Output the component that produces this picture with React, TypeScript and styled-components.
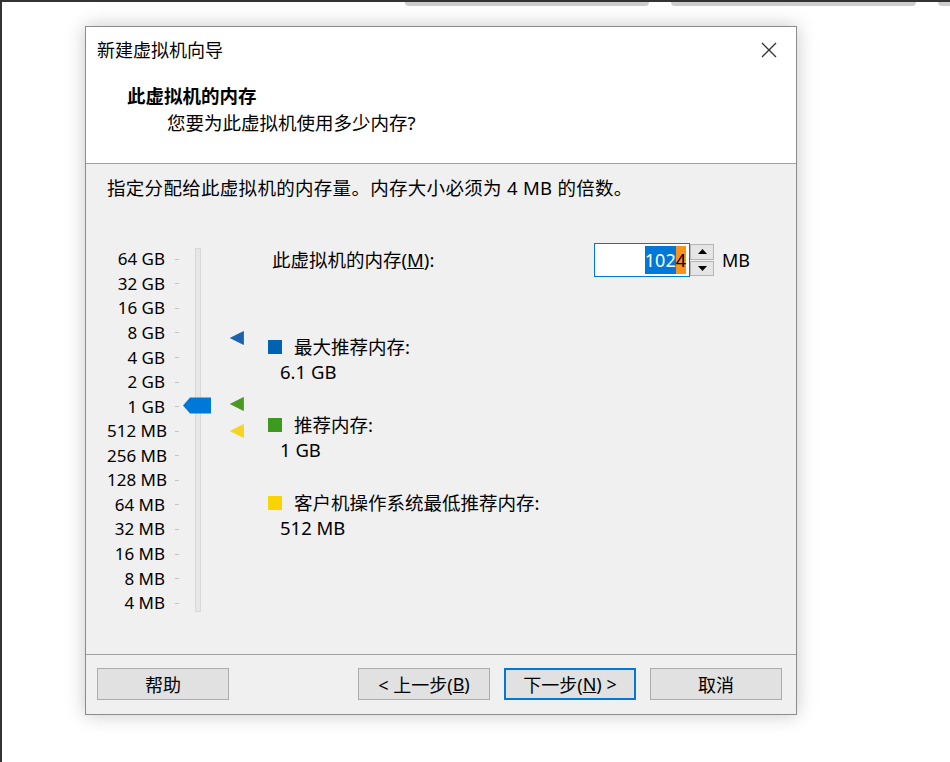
import React from 'react'
import styled, { createGlobalStyle } from 'styled-components'

const GlobalStyle = createGlobalStyle`
  html, body {
    margin: 0;
    padding: 0;
    background: #fff;
  }
  body {
    font-family: "Noto Sans", "Noto Sans CJK SC", sans-serif;
    color: #000;
  }
`;

const scale = [
    '64 GB', '32 GB', '16 GB', '8 GB', '4 GB', '2 GB', '1 GB',
    '512 MB', '256 MB', '128 MB', '64 MB', '32 MB', '16 MB', '8 MB', '4 MB',
];

const legend = [
    { color: '#0063b1', title: '最大推荐内存:', value: '6.1 GB' },
    { color: '#3d9a1f', title: '推荐内存:', value: '1 GB' },
    { color: '#fad400', title: '客户机操作系统最低推荐内存:', value: '512 MB' },
];

const markers = [
    { color: '#1a62ad', top: 88 },
    { color: '#4a9a22', top: 154 },
    { color: '#f5d420', top: 181 },
];

export default function App() {
    return (
        <>
            <GlobalStyle />
            <Screen>
                <TabStrip>
                    <Tab $w={244} />
                    <Tab $w={245} />
                    <Tab $w={30} />
                </TabStrip>
                <Dialog>
                    <Header>
                        <TitleRow>
                            <Title>新建虚拟机向导</Title>
                            <CloseIcon viewBox="0 0 16 16">
                                <path d="M1 1 L15 15 M15 1 L1 15" stroke="#333" strokeWidth="1.3" />
                            </CloseIcon>
                        </TitleRow>
                        <Heading>此虚拟机的内存</Heading>
                        <Subtitle>您要为此虚拟机使用多少内存?</Subtitle>
                    </Header>
                    <Body>
                        <Description>指定分配给此虚拟机的内存量。内存大小必须为 4 MB 的倍数。</Description>
                        <Main>
                            <SliderArea>
                                <Labels>
                                    {scale.map(s => (
                                        <ScaleRow key={s}>
                                            <ScaleLabel>{s}</ScaleLabel>
                                            <Tick />
                                        </ScaleRow>
                                    ))}
                                </Labels>
                                <Track />
                                <Thumb viewBox="0 0 28 17">
                                    <polygon points="0,8.5 7,0.5 28,0.5 28,16.5 7,16.5" fill="#0078d7" />
                                </Thumb>
                                {markers.map(m => (
                                    <Marker key={m.top} viewBox="0 0 14 14" style={{ top: m.top }}>
                                        <polygon points="0.5,7 13.5,0.5 13.5,13.5" fill={m.color} stroke={m.color} strokeWidth="0.8" strokeLinejoin="round" />
                                    </Marker>
                                ))}
                            </SliderArea>
                            <RightColumn>
                                <InputRow>
                                    <MemLabel>此虚拟机的内存(<u>M</u>):</MemLabel>
                                    <SpinInput>
                                        <Selected>102</Selected>
                                        <Caret>4</Caret>
                                    </SpinInput>
                                    <SpinButtons>
                                        <SpinButton>
                                            <svg width="9" height="5" viewBox="0 0 9 5"><polygon points="4.5,0 9,5 0,5" fill="#000" /></svg>
                                        </SpinButton>
                                        <SpinButton>
                                            <svg width="9" height="5" viewBox="0 0 9 5"><polygon points="0,0 9,0 4.5,5" fill="#000" /></svg>
                                        </SpinButton>
                                    </SpinButtons>
                                    <Unit>MB</Unit>
                                </InputRow>
                                <Legend>
                                    {legend.map(l => (
                                        <LegendItem key={l.title}>
                                            <LegendTitle>
                                                <Swatch $color={l.color} />
                                                {l.title}
                                            </LegendTitle>
                                            <LegendValue>{l.value}</LegendValue>
                                        </LegendItem>
                                    ))}
                                </Legend>
                            </RightColumn>
                        </Main>
                    </Body>
                    <Footer>
                        <Button>帮助</Button>
                        <Spacer />
                        <Button>&lt; 上一步(<u>B</u>)</Button>
                        <Button $primary>下一步(<u>N</u>) &gt;</Button>
                        <Button>取消</Button>
                    </Footer>
                </Dialog>
            </Screen>
        </>
    )
}

const Screen = styled.div`
    width: 950px;
    height: 762px;
    box-sizing: border-box;
    border-left: 2px solid #333;
    border-top: 2px solid #333;
    overflow: hidden;
    background: #fff;
`;

const TabStrip = styled.div`
    display: flex;
    gap: 22px;
    padding-left: 403px;
    height: 4px;
`;

const Tab = styled.div<{ $w: number }>`
    flex: none;
    width: ${p => p.$w}px;
    height: 4px;
    background: #cdcdcd;
    border-radius: 0 0 5px 5px;
`;

const Dialog = styled.div`
    margin: 20px 0 0 83px;
    width: 712px;
    height: 689px;
    box-sizing: border-box;
    border: 1px solid #8c8c8c;
    background: #f0f0f0;
    box-shadow: 0 0 18px rgba(0, 0, 0, 0.22);
    display: flex;
    flex-direction: column;
`;

const Header = styled.div`
    height: 137px;
    box-sizing: border-box;
    background: #fff;
    border-bottom: 1px solid #a0a0a0;
`;

const TitleRow = styled.div`
    height: 46px;
    display: flex;
    align-items: center;
    justify-content: space-between;
    padding: 0 19px 0 11px;
`;

const Title = styled.div`
    font-size: 18px;
    line-height: 22px;
`;

const CloseIcon = styled.svg`
    width: 16px;
    height: 16px;
`;

const Heading = styled.div`
    margin-top: 13px;
    padding-left: 41px;
    font-size: 18.5px;
    font-weight: bold;
    line-height: 20px;
`;

const Subtitle = styled.div`
    margin-top: 7px;
    padding-left: 81px;
    font-size: 18.5px;
    line-height: 20px;
`;

const Body = styled.div`
    flex: 1;
    padding: 13px 0 0 21px;
`;

const Description = styled.div`
    font-size: 18.5px;
    line-height: 22px;
    letter-spacing: 0.3px;
`;

const Main = styled.div`
    margin-top: 44px;
    display: flex;
    align-items: flex-start;
`;

const SliderArea = styled.div`
    position: relative;
    width: 161px;
    padding-top: 4px;
    display: flex;
    align-items: flex-start;
`;

const Labels = styled.div`
    display: flex;
    flex-direction: column;
`;

const ScaleRow = styled.div`
    height: 24.57px;
    display: flex;
    align-items: center;
`;

const ScaleLabel = styled.span`
    width: 58px;
    text-align: right;
    font-size: 17px;
    line-height: 20px;
    white-space: nowrap;
`;

const Tick = styled.span`
    margin-left: 10px;
    width: 4px;
    height: 1px;
    background: #c4c4c4;
`;

const Track = styled.div`
    margin: 1px 0 0 16px;
    width: 6px;
    height: 364px;
    box-sizing: border-box;
    background: #e7e7e7;
    border: 1px solid #d8d8d8;
`;

const Thumb = styled.svg`
    position: absolute;
    left: 76px;
    top: 154px;
    width: 28px;
    height: 17px;
`;

const Marker = styled.svg`
    position: absolute;
    left: 123px;
    width: 14px;
    height: 14px;
`;

const RightColumn = styled.div`
    display: flex;
    flex-direction: column;
`;

const InputRow = styled.div`
    height: 34px;
    display: flex;
    align-items: center;
`;

const MemLabel = styled.div`
    width: 326px;
    box-sizing: border-box;
    padding-left: 4px;
    font-size: 18.5px;
    line-height: 22px;
`;

const SpinInput = styled.div`
    width: 96px;
    height: 34px;
    box-sizing: border-box;
    border: 1px solid #0078d7;
    background: #fff;
    display: flex;
    align-items: center;
    justify-content: flex-end;
    padding-right: 3px;
    font-size: 18px;
`;

const Selected = styled.span`
    background: #0078d7;
    color: #fff;
    line-height: 28px;
`;

const Caret = styled.span`
    background: #f7931e;
    color: #000;
    line-height: 28px;
`;

const SpinButtons = styled.div`
    width: 24px;
    height: 34px;
    display: flex;
    flex-direction: column;
    gap: 1px;
    padding: 1px 0;
    box-sizing: border-box;
`;

const SpinButton = styled.div`
    flex: 1;
    background: #e5e5e5;
    border: 1px solid #b5b5b5;
    display: flex;
    align-items: center;
    justify-content: center;
`;

const Unit = styled.span`
    margin-left: 8px;
    font-size: 18px;
`;

const Legend = styled.div`
    margin-top: 57px;
    display: flex;
    flex-direction: column;
    gap: 28px;
`;

const LegendItem = styled.div`
    display: flex;
    flex-direction: column;
    font-size: 18.5px;
    line-height: 25px;
`;

const LegendTitle = styled.div`
    display: flex;
    align-items: center;
`;

const Swatch = styled.span<{ $color: string }>`
    width: 14px;
    height: 14px;
    margin-right: 12px;
    background: ${p => p.$color};
`;

const LegendValue = styled.div`
    padding-left: 12px;
`;

const Footer = styled.div`
    height: 60px;
    box-sizing: border-box;
    border-top: 1px solid #a0a0a0;
    display: flex;
    align-items: flex-start;
    gap: 14px;
    padding: 13px 14px 0 11px;
`;

const Spacer = styled.div`
    flex: 1;
`;

const Button = styled.div<{ $primary?: boolean }>`
    width: 132px;
    height: 32px;
    box-sizing: border-box;
    display: flex;
    align-items: center;
    justify-content: center;
    background: #e1e1e1;
    border: ${p => p.$primary ? '2px solid #0078d7' : '1px solid #adadad'};
    font-size: 18px;
    white-space: nowrap;
`;
